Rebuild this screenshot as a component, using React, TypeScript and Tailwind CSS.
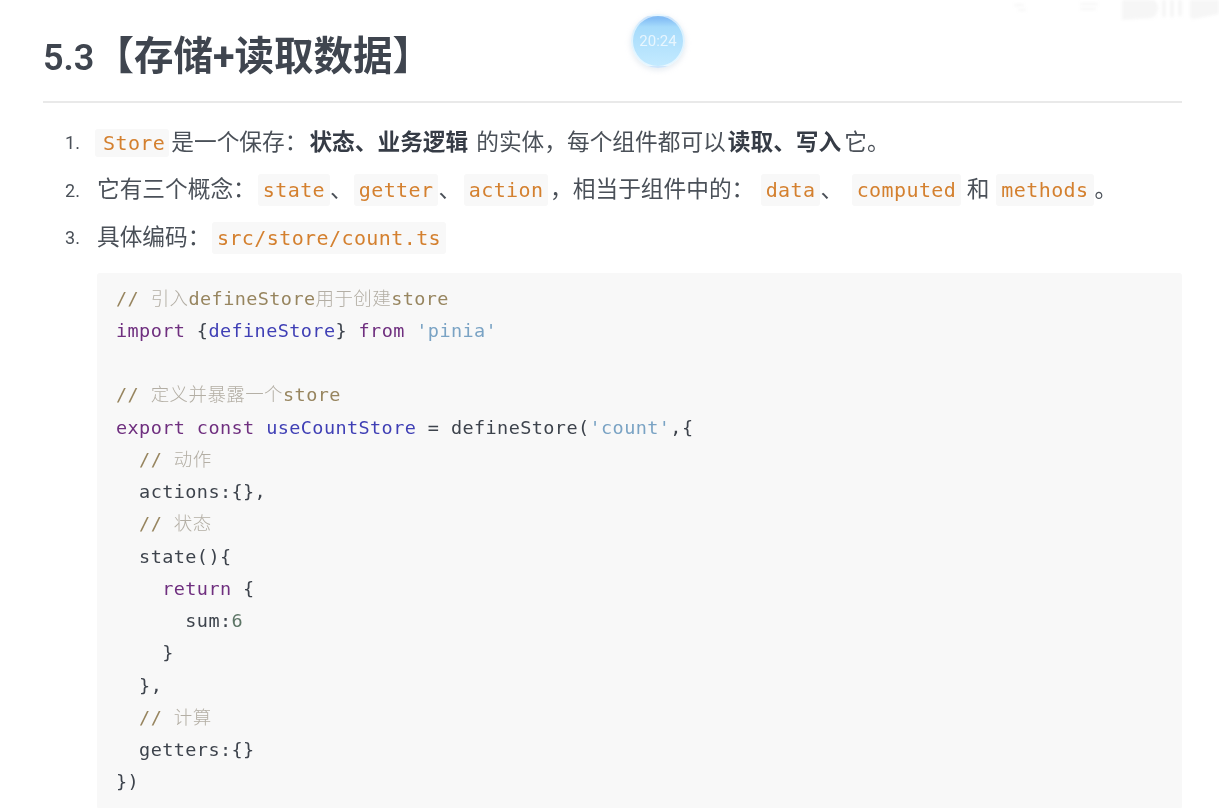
const sans = "font-['Roboto','Noto_Sans_CJK_SC',sans-serif]";

const kw = "text-[#6f2f7f]";
const def = "text-[#3f3fb5]";
const str = "text-[#7aa3c4]";
const com = "text-[#97855f]";
const comCjk = "font-light text-[#b3aea4]";
const plain = "text-[#3d434c]";
const num = "text-[#5d7566]";

type Token = [string, string];

const lines: Token[][] = [
  [["// ", com], ["引入", comCjk], ["defineStore", com], ["用于创建", comCjk], ["store", com]],
  [["import", kw], [" {", plain], ["defineStore", def], ["} ", plain], ["from", kw], [" ", plain], ["'pinia'", str]],
  [[" ", plain]],
  [["// ", com], ["定义并暴露一个", comCjk], ["store", com]],
  [["export const", kw], [" ", plain], ["useCountStore", def], [" = defineStore(", plain], ["'count'", str], [",{", plain]],
  [["  // ", com], ["动作", comCjk]],
  [["  actions:{},", plain]],
  [["  // ", com], ["状态", comCjk]],
  [["  state(){", plain]],
  [["    ", plain], ["return", kw], [" {", plain]],
  [["      sum:", plain], ["6", num]],
  [["    }", plain]],
  [["  },", plain]],
  [["  // ", com], ["计算", comCjk]],
  [["  getters:{}", plain]],
  [["})", plain]],
];

function Chip({ children, className = "" }: { children: string; className?: string }) {
  return (
    <code
      className={`rounded-[3px] bg-[#f8f8f8] py-[4px] font-['DejaVu_Sans_Mono',monospace] text-[20px] tracking-[0.41px] text-[#d4802f] ${className}`}
    >
      {children}
    </code>
  );
}

function Item({ n, children }: { n: number; children: React.ReactNode }) {
  return (
    <li className="flex h-[47.5px] items-center">
      <span className="w-[54px] pl-[22px] text-[18px] text-[#4a5058]">{n}.</span>
      <div className="whitespace-nowrap">{children}</div>
    </li>
  );
}

function Bold({ children, className = "" }: { children: string; className?: string }) {
  return <strong className={`font-bold text-[#363c46] ${className}`}>{children}</strong>;
}

export default function App() {
  return (
    <div className={`relative h-[808px] overflow-hidden bg-white pl-[43px] pr-[37px] blur-[0.4px] ${sans}`}>
      {/* timer bubble */}
      <div className="absolute left-[631px] top-[14px] flex h-[54px] w-[54px] items-center justify-center overflow-hidden rounded-full border-2 border-white/60 bg-gradient-to-b from-[#84bdf5] from-[5%] via-[#a6dbfb] via-[22%] to-[#c3eaff] shadow-[0_2px_5px_1px_rgba(200,212,225,0.4)]">
        <span className="text-[15px] text-white/70">20:24</span>
      </div>

      {/* watermark */}
      <svg className="absolute right-0 top-0 blur-[1.5px]" width="219" height="24" viewBox="0 0 219 24" fill="#f6f6f6">
        <path d="M122 0h30c4 0 6 4 6 8 0 5-3 10-8 10l-28 2z" />
        <path d="M162 0h4v17h-4zM170 0h4v17h-4zM178 0h4v16h-4z" />
        <path d="M190 0h29v14l-25 5c-3 0-4-1-4-4z" />
        <path d="M14 4h10v2H14zM18 9h8v2h-8zM80 3h18v2H80zM80 8h16v2H80z" />
      </svg>

      <h2 className="border-b-2 border-[#e9e9e9] pb-[21px] pt-[35px] text-[39.5px] font-bold leading-[44px] text-[#3f454f]">
        <span className="text-[36px] font-semibold">5.3</span>【存储+读取数据】
      </h2>

      <ol className="mt-[16px] text-[22.7px] text-[#4a5058]">
        <Item n={1}>
          <Chip className="ml-[-2px] mr-[2px] pl-[8px] pr-[4px] !py-[2px]">Store</Chip>是一个保存：
          <Bold className="ml-[2px]">状态、业务逻辑</Bold>
          <span className="ml-[8px]">的实体，每个组件都可以</span>
          <Bold className="ml-[2px]">读取、写入</Bold>
          <span className="ml-[3px]">它。</span>
        </Item>
        <Item n={2}>
          它有三个概念：
          <Chip className="ml-[2px] px-[5px]">state</Chip>、<Chip className="ml-[1px] px-[5px]">getter</Chip>、
          <Chip className="ml-[2.6px] mr-[1.6px] px-[5px]">action</Chip>，相当于组件中的：
          <Chip className="ml-[6.4px] px-[5px]">data</Chip>、<Chip className="ml-[8.5px] px-[5px]">computed</Chip>
          <span className="ml-[5.4px]">和</span>
          <Chip className="ml-[7px] mr-[1px] px-[5px]">methods</Chip>。
        </Item>
        <Item n={3}>
          具体编码：<Chip className="ml-[1.5px] px-[5px]">src/store/count.ts</Chip>
        </Item>
      </ol>

      <pre className="ml-[54px] mt-[11px] rounded-[3px] bg-[#f8f8f8] py-[10px] pl-[19px] font-['DejaVu_Sans_Mono','Noto_Sans_CJK_SC',monospace] text-[18.5px] leading-[32.27px] tracking-[0.41px]">
        {lines.map((line, i) => (
          <div key={i}>
            {line.map(([text, color], j) => (
              <span key={j} className={color}>
                {text}
              </span>
            ))}
          </div>
        ))}
      </pre>
    </div>
  );
}
